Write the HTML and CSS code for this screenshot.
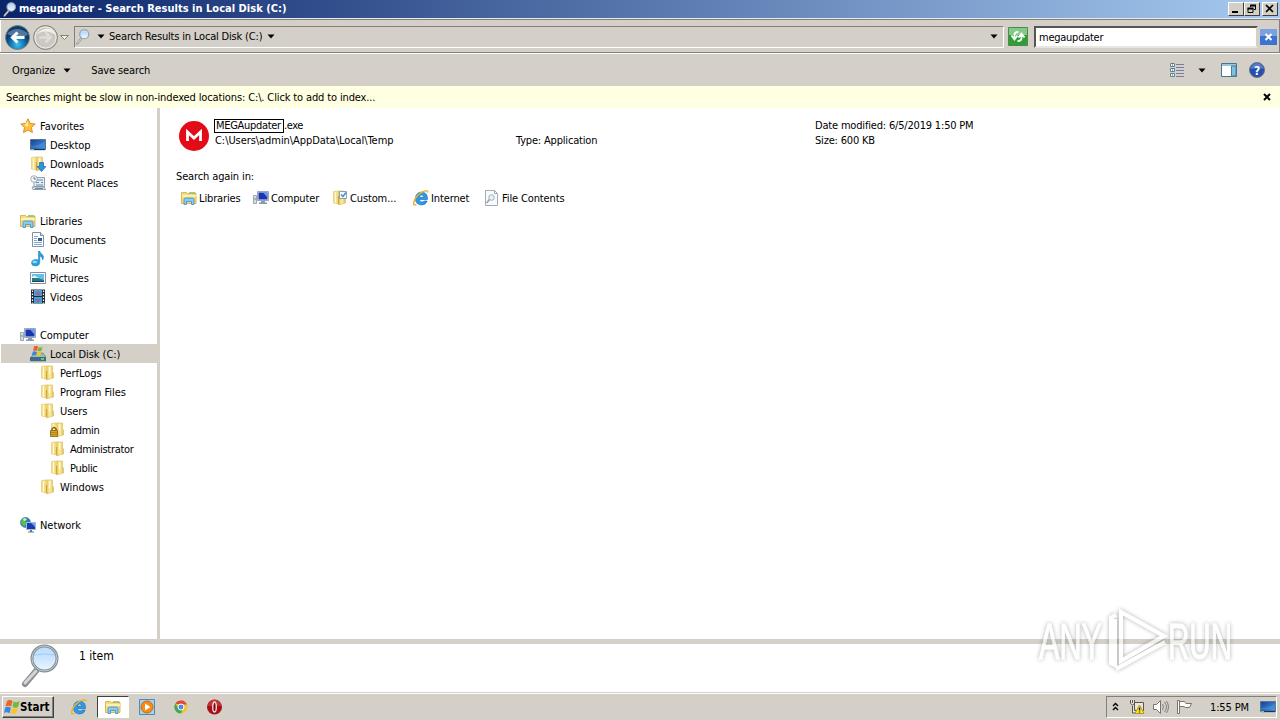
FILE: index.html
```html
<!DOCTYPE html>
<html lang="en">
<head>
    <meta charset="utf-8">
    <title>megaupdater - Search Results in Local Disk (C:)</title>
    <link rel="stylesheet" href="styles.css">
</head>
<body>
    <!-- icon definitions -->
    <svg class="defs" width="0" height="0">
        <defs>
            <linearGradient id="gold" x1="0" x2="1" y2="0"><stop offset="0" stop-color="#f0d672"/><stop offset=".5" stop-color="#fbeca0"/><stop offset="1" stop-color="#dcb94c"/></linearGradient>
            <linearGradient id="blue" x1="0" x2="1" y2="1"><stop offset="0" stop-color="#123f94"/><stop offset="1" stop-color="#4d9be6"/></linearGradient>
            <radialGradient id="sky" cy=".8"><stop offset="0" stop-color="#35c5f4"/><stop offset=".6" stop-color="#1672ae"/><stop offset="1" stop-color="#0b3c6e"/></radialGradient>
            <linearGradient id="lens" x2="0" y2="1"><stop offset="0" stop-color="#bcdcfb"/><stop offset=".45" stop-color="#c8e4ff"/><stop offset="1" stop-color="#edf8ff"/></linearGradient>
            <symbol id="folder" viewBox="0 0 16 16">
                <path d="M1.500 1.500l4-.5h2v13l-6-1z" fill="#f2dc80" stroke="#dfc668" stroke-width=".6"/>
                <path d="M7 1h5.500v6l1 1v5l-6.500 1.800z" fill="url(#gold)" stroke="#d9bb5c" stroke-width=".6"/>
                <path d="M6.500 6v8.500" stroke="#cda63e" stroke-width="1.200"/><path d="M3.500 2v11M9.500 2v7" stroke="#fff9d4" stroke-width="1.300"/>
            </symbol>
            <symbol id="library" viewBox="0 0 16 16">
                <path d="M.5 2.500h5l1 1h8.500v10h-14.500z" fill="#f5dc7d" stroke="#d0aa42" stroke-width=".8"/>
                <path d="M8 2.800h6.500" stroke="#6fb66c"/><path d="M1 6h14" stroke="#fff7c6" stroke-width="1.500"/>
                <path d="M3 14.500V9.500q0-1.500 1.500-1.500h7q1.500 0 1.500 1.500v5h-2.500v-3h-5v3z" fill="#8bcaf0" stroke="#3d8ec6" stroke-width=".8"/>
            </symbol>
            <symbol id="screen" viewBox="0 0 16 16">
                <path d="M.5 2.500h15v10H.5z" fill="url(#blue)" stroke="#5b7692"/>
                <path d="M1 9q7 1 14-5v6H1z" fill="#4b9ae3" opacity=".45"/><path d="M1 12.500h14" stroke="#173659" stroke-width="1.300"/><path d="M1 12.500h3" stroke="#6bcb86"/>
            </symbol>
            <symbol id="computer" viewBox="0 0 16 16">
                <path d="M.5 5.500h3v8h-3z" fill="#d8dde3" stroke="#8996a4" stroke-width=".8"/><path d="M1 9h2" stroke="#58a65a"/>
                <path d="M4.500 1.500h11v9h-11z" fill="#d8e4f3" stroke="#8294b0" stroke-width=".8"/>
                <path d="M5.500 2.500h9v7h-9z" fill="#1a36ad"/><path d="M10 2.500h4.500v5z" fill="#6c99ee"/>
                <path d="M8 11h4v1.500h2V14H6v-1.500h2z" fill="#8b98ab"/>
            </symbol>
            <symbol id="drive" viewBox="0 0 16 16">
                <path d="M2 10l2-3h9l3 4v4H1v-3z" fill="#9bb9ac" stroke="#597568" stroke-width=".6"/><path d="M0 11h16v4H0z" fill="#3d6b8d"/>
                <path d="M11 13h3" stroke="#78eb65" stroke-width="1.500"/>
                <path d="M4 .500q2-1.500 4 0L7 5Q5 4 3 5z" fill="#ee5e2b"/><path d="M8.500 1q2 1 4-.3l-1 4q-2 1-4 .3z" fill="#76b83b"/>
                <path d="M2.800 5.700q2-1 4 .2l-1 3.500q-2-1-4 0z" fill="#3787d8"/><path d="M7.400 6q2 1 4-.2l-1 3.700q-2 1-4 .1z" fill="#f6c52d"/>
            </symbol>
            <symbol id="star" viewBox="0 0 16 16"><path d="M8 .8l2.100 4.600 5.100.6-3.800 3.500 1 5L8 12l-4.500 2.500 1-5L.8 6l5.100-.6z" fill="#ffc23a" stroke="#e08a2b"/><path d="M8 3v6L4.500 7z" fill="#fff1a0"/></symbol>
            <symbol id="download" viewBox="0 0 16 16"><use href="#folder"/><path d="M9.500 6.500h4v4H16l-4.500 5L7 10.500h2.500z" fill="#2d94dd" stroke="#1b67ad" stroke-width=".7"/></symbol>
            <symbol id="recent" viewBox="0 0 16 16">
                <path d="M4 2.500h10.500v9H4zM2 12h12l1.500 2.500H3z" fill="#e5edf2" stroke="#8195a4" stroke-width=".9"/>
                <path d="M7 5h6M6 7.500h3m2 0h2M6 10h7M5 13.500h8" stroke="#668ba8"/>
                <circle cx="4" cy="4" r="3.300" fill="#f3f8fb" stroke="#8a9cab" stroke-width=".8"/><path d="M4 2v2h2" fill="none" stroke="#456079" stroke-width=".8"/>
            </symbol>
            <symbol id="document" viewBox="0 0 16 16"><path d="M2.500.5h8l3 3v11h-11z" fill="#fff" stroke="#8193a6"/><path d="M10.500.5v3h3" fill="#dce8f2" stroke="#71869c"/><path d="M4 4.500h4M4 6.500h3M4 8.500h3M4 10.500h8M4 12.500h8" stroke="#86a8ce"/><path d="M8 6h4v3H8z" fill="#276498"/></symbol>
            <symbol id="music" viewBox="0 0 16 16"><path d="M8.500 0h1.200q.3 2 2.300 3.300 2.600 2 .8 5.700-.2-3-3-4.200V11q0 3.800-4.300 4-4 0-4-3 .2-3.500 4.500-3.500 1.500 0 2.500.6z" fill="#27a0de" stroke="#187bb8" stroke-width=".5"/><ellipse cx="4.800" cy="11" rx="2.300" ry="1.200" fill="#8ddcfa"/></symbol>
            <symbol id="picture" viewBox="0 0 16 16"><path d="M.5 2.500h15v11H.5z" fill="#fff" stroke="#7b8fa6"/><path d="M2 4h12v8H2z" fill="#65bded"/><path d="M2 7q3-2 6 1l6 2v2H2z" fill="#2e7b72"/><path d="M2 7q2-3 5 0l2 1-7 0z" fill="#d4f5fa"/><path d="M2 11h12v1H2z" fill="#18466b"/></symbol>
            <symbol id="video" viewBox="0 0 16 16"><path d="M1 .5h14v14H1z" fill="#202935"/><path d="M4 1h8v6H4z" fill="#5598d4"/><path d="M4 8h8v6H4z" fill="#32a6df"/><path d="M5 5q3-5 6 0l-2 2zM5 11q3-3 6 0l-3 3z" fill="#8c6f92"/><path d="M2.500 1.500v13M13.500 1.500v13" stroke="#fff" stroke-dasharray="1.500 1.500" stroke-width="1.200"/></symbol>
            <symbol id="lock" viewBox="0 0 16 16"><use href="#folder"/><path d="M2 9V7q2-3 4 0v2" fill="none" stroke="#815b1a" stroke-width="1.300"/><path d="M.5 8.500h7v6h-7z" fill="#dda624" stroke="#835d12" stroke-width=".8"/><path d="M1 10.500h6M1 12.500h6" stroke="#a97f20" stroke-width=".8"/></symbol>
            <symbol id="network" viewBox="0 0 16 16"><circle cx="5.500" cy="5.500" r="5" fill="#2582bd" stroke="#3d6a9d" stroke-width=".6"/><path d="M2 2q3-2 5 0L5 4l2 2-3 4-3-4z" fill="#57bd55"/><path d="M3 2l2-1 2 2-3 1z" fill="#d3efba"/><path d="M6.500 5.500h9v7h-9z" fill="#1739ba" stroke="#a8bbcf"/><path d="M11 6h4v4z" fill="#6c9df2"/><path d="M10 13h2v1.500h2v1H8v-1h2z" fill="#6b7885"/></symbol>
            <symbol id="custom" viewBox="0 0 16 16"><use href="#folder"/><path d="M7.500 1.500h7v7h-7z" fill="#f4faff" stroke="#8ba0b5"/><path d="M9 4.500l2 2 3-4" fill="none" stroke="#3d85c5" stroke-width="1.300"/></symbol>
            <symbol id="ie" viewBox="0 0 16 16">
                <path d="M14.500 9.500H6.200q.5 2.500 2.800 2.500 1.500 0 2-1h3.200q-1.200 4-5.700 4-6-.4-6.200-6.400Q2.600 2.600 8.500 2 15 2.500 14.500 9.500zM6.300 7.300h4.600Q10.700 5 8.500 5 6.500 5 6.300 7.300z" fill="#2d9ae6" stroke="#1a66b8" stroke-width=".6"/>
                <path d="M3.500 14.500q-4 1.500-2.500-3Q3 5.500 9 2.200q6-3 6 .2" fill="none" stroke="#edb52f" stroke-width="1.500"/>
            </symbol>
            <symbol id="filecontents" viewBox="0 0 16 16"><path d="M1.500.5h9l3 3v12h-12z" fill="#f8fafb" stroke="#a3abb2"/><path d="M10.500.5v3h3" fill="none" stroke="#a3abb2"/><circle cx="7.500" cy="7.500" r="2.800" fill="#e5f2f9" stroke="#a0afbb"/><path d="M5.500 9.500l-3 3.500" stroke="#929da6" stroke-width="1.500"/></symbol>
            <symbol id="glass" viewBox="0 0 40 44">
                <path d="M15 27L4 40" stroke="#8b8f93" stroke-width="6" stroke-linecap="round"/><path d="M15 27L4 39" stroke="#d3d5d7" stroke-width="3" stroke-linecap="round"/>
                <circle cx="23.500" cy="14.500" r="12.500" fill="url(#lens)" stroke="#858d95" stroke-width="3"/><circle cx="23.500" cy="14.500" r="12.500" fill="none" stroke="#c3cbd2" stroke-width="1"/>
                <path d="M13 11q11-2 21 0" fill="none" stroke="#a1ccf4"/>
            </symbol>
            <symbol id="flag" viewBox="0 0 16 16"><path d="M3 2q3-2 5.500 0L7.300 7.500Q5 6 1.500 7.500z" fill="#eb642a"/><path d="M9.500 2.500q3 1.500 6-.5l-1.400 6q-3 1.500-5.500 0z" fill="#73b93c"/><path d="M1.200 8.500q3-1.500 5.700.3l-1.300 5.400q-3-2-5.600-.2z" fill="#3a88dc"/><path d="M8.200 9q3 1.500 5.600-.2l-1.300 5.400q-3 1.500-5.700.2z" fill="#f7c52e"/></symbol>
            <symbol id="down" viewBox="0 0 8 5"><path d="M.5 .5h7L4 4.500z"/></symbol>
            <filter id="soft" x="-10%" y="-20%" width="120%" height="140%"><feDropShadow dx="0" dy="0" stdDeviation="2" flood-color="#555" flood-opacity=".75"/></filter>
        </defs>
    </svg>

    <div class="window">
        <div class="titlebar">
            <svg class="icon"><use href="#glass"/></svg>
            <h1>megaupdater - Search Results in Local Disk (C:)</h1>
            <div class="window-buttons">
                <button aria-label="Minimize"><svg width="12" height="10"><path d="M2 7h6v2H2z"/></svg></button>
                <button aria-label="Restore"><svg width="12" height="10"><path d="M4 .5h6v2H4zM1.500 3.500h6v2h-6z"/><path d="M4.500 3V1.500h5v4H8M2 4.500h5v4H2z" fill="none" stroke="#000"/></svg></button>
                <button class="close" aria-label="Close"><svg width="12" height="10"><path d="M2 1l7 7M9 1L2 8" stroke="#000" stroke-width="1.700"/></svg></button>
            </div>
        </div>

        <div class="navbar">
            <svg class="history" width="70" height="28" viewBox="0 0 70 28">
                <circle cx="15.500" cy="14.500" r="12" fill="url(#sky)" stroke="#71818d"/><path d="M5 10.500q10-9 21 0-1 4-10 3-8 0-11-3z" fill="#fff" opacity=".3"/>
                <path d="M22.500 14.500h-12m5-5l-5 5 5 5" fill="none" stroke="#fff" stroke-width="3"/>
                <circle cx="43.500" cy="14.500" r="12" fill="#cbc8c2" stroke="#85827d"/><circle cx="43.500" cy="14.500" r="10.500" fill="none" stroke="#efede9"/><path d="M32.500 12.500q11-8 22 0-7-14-22 0z" fill="#f1efec"/>
                <path d="M37.500 14.500h11m-5-5l5 5-5 5" fill="none" stroke="#e0ddd8" stroke-width="2.500"/>
                <path d="M58.500 12.500h8l-4 4z" fill="#f3f1ee" stroke="#858078"/>
            </svg>
            <div class="address">
                <svg class="icon"><use href="#glass"/></svg>
                <svg class="arrow"><use href="#down"/></svg>
                <span>Search Results in Local Disk (C:)</span>
                <svg class="arrow"><use href="#down"/></svg>
                <svg class="arrow last"><use href="#down"/></svg>
            </div>
            <svg class="refresh" width="20" height="19" viewBox="0 0 20 19"><path d="M.5.5h19v18H.5z" fill="#2f9e35" stroke="#528751"/><path d="M1 1h18v7H1z" fill="#83c989"/><path d="M6.500 12V8q0-3 4-3M3.500 8.500l3 4 3-4M13.500 7v4q0 3-4 3M10.500 10.500l3-4 3 4" fill="none" stroke="#fff" stroke-width="1.800"/></svg>
            <div class="search"><span>megaupdater</span></div>
            <svg class="clear" width="17" height="16"><path d="M0 0h17v16H0z" fill="#3a74d0"/><path d="M0 0h17v7H0z" fill="#7ba1e3"/><path d="M5.500 5l6 6M11.500 5l-6 6" stroke="#fff" stroke-width="2"/></svg>
        </div>

        <div class="toolbar">
            <span class="organize">Organize</span>
            <svg class="arrow"><use href="#down"/></svg>
            <span class="save">Save search</span>
            <svg class="view" width="15" height="15" viewBox="0 0 15 15"><path d="M.5.5h4v3h-4zM.5 5.500h4v3h-4zM.5 10.500h4v3h-4z" fill="#fff" stroke="#5d8294"/><path d="M2 2h1M2 7h1M2 12h1" stroke="#235f80"/><path d="M6 1.500h8M6 4.500h8M6 7.500h8M6 10.500h8M6 13.500h8" stroke="#797ba3"/></svg>
            <svg class="arrow"><use href="#down"/></svg>
            <svg class="preview" width="16" height="15" viewBox="0 0 16 15"><path d="M.5.500h15v13H.5z" fill="#fff" stroke="#427590"/><path d="M1 1h14v2H1z" fill="#9cc6d8"/><path d="M10.500 3v10h4.500V3z" fill="#7dc0df" stroke="#487f99"/></svg>
            <svg class="help" width="16" height="16"><circle cx="8" cy="8" r="7.500" fill="#254eb0" stroke="#6c7391"/><path d="M1.500 7q2-6 6.500-6t6.500 6q-6-2-13 0z" fill="#779ada" opacity=".6"/><text x="5" y="12.500">?</text></svg>
        </div>

        <div class="infobar"><span>Searches might be slow in non-indexed locations: C:\. Click to add to index...</span><svg width="8" height="8"><path d="M1 1l6 6M7 1L1 7" stroke="#000" stroke-width="2"/></svg></div>

        <div class="content">
            <ul class="tree">
                <li><svg class="icon"><use href="#star"/></svg><span>Favorites</span></li>
                <li class="level-1"><svg class="icon"><use href="#screen"/></svg><span>Desktop</span></li>
                <li class="level-1"><svg class="icon"><use href="#download"/></svg><span>Downloads</span></li>
                <li class="level-1"><svg class="icon"><use href="#recent"/></svg><span>Recent Places</span></li>
                <li class="group"><svg class="icon"><use href="#library"/></svg><span>Libraries</span></li>
                <li class="level-1"><svg class="icon"><use href="#document"/></svg><span>Documents</span></li>
                <li class="level-1"><svg class="icon"><use href="#music"/></svg><span>Music</span></li>
                <li class="level-1"><svg class="icon"><use href="#picture"/></svg><span>Pictures</span></li>
                <li class="level-1"><svg class="icon"><use href="#video"/></svg><span>Videos</span></li>
                <li class="group"><svg class="icon"><use href="#computer"/></svg><span>Computer</span></li>
                <li class="level-1 selected"><svg class="icon"><use href="#drive"/></svg><span>Local Disk (C:)</span></li>
                <li class="level-2"><svg class="icon"><use href="#folder"/></svg><span>PerfLogs</span></li>
                <li class="level-2"><svg class="icon"><use href="#folder"/></svg><span>Program Files</span></li>
                <li class="level-2"><svg class="icon"><use href="#folder"/></svg><span>Users</span></li>
                <li class="level-3"><svg class="icon"><use href="#lock"/></svg><span>admin</span></li>
                <li class="level-3"><svg class="icon"><use href="#folder"/></svg><span>Administrator</span></li>
                <li class="level-3"><svg class="icon"><use href="#folder"/></svg><span>Public</span></li>
                <li class="level-2"><svg class="icon"><use href="#folder"/></svg><span>Windows</span></li>
                <li class="group"><svg class="icon"><use href="#network"/></svg><span>Network</span></li>
            </ul>
            <div class="results">
                <div class="result">
                    <svg width="30" height="30"><circle cx="15" cy="15" r="15" fill="#e30b17"/><path d="M8.500 20v-9l6.500 6 6.500-6v9" fill="none" stroke="#fff" stroke-width="2.800"/></svg>
                    <div class="name"><div><mark>MEGAupdater</mark><span>.exe</span></div><div class="path">C:\Users\admin\AppData\Local\Temp</div></div>
                    <div class="type">Type: Application</div>
                    <div class="meta"><div>Date modified: 6/5/2019 1:50 PM</div><div>Size: 600 KB</div></div>
                </div>
                <p>Search again in:</p>
                <div class="again">
                    <span class="to-libraries"><svg class="icon"><use href="#library"/></svg>Libraries</span>
                    <span class="to-computer"><svg class="icon"><use href="#computer"/></svg>Computer</span>
                    <span class="to-custom"><svg class="icon"><use href="#custom"/></svg>Custom...</span>
                    <span class="to-internet"><svg class="icon"><use href="#ie"/></svg>Internet</span>
                    <span class="to-contents"><svg class="icon"><use href="#filecontents"/></svg>File Contents</span>
                </div>
            </div>
        </div>

        <div class="details"><svg class="big-glass"><use href="#glass"/></svg><span>1 item</span></div>

        <div class="taskbar">
            <button class="start"><svg class="icon"><use href="#flag"/></svg>Start</button>
            <div class="task"><svg class="icon"><use href="#ie"/></svg></div>
            <div class="task active"><svg class="icon"><use href="#library"/></svg></div>
            <div class="task"><svg class="icon" viewBox="0 0 16 16"><path d="M.5.500h15v15H.5z" fill="#a8d1ee" stroke="#4b8bc3"/><circle cx="8" cy="8" r="6" fill="#f58b14" stroke="#d06a0b"/><path d="M6 4.500v7l5.500-3.500z" fill="#fff"/></svg></div>
            <div class="task"><svg class="icon" viewBox="0 0 16 16"><circle cx="8" cy="8" r="6.500" fill="#f3c52e"/><path d="M2.300 4.700A6.500 6.500 0 0 1 14 5.500H8z" fill="#df4937"/><path d="M2.300 4.700A6.500 6.500 0 0 0 8 14.500L10 9 5.500 9z" fill="#42a657"/><circle cx="8" cy="8" r="3" fill="#4b8bea" stroke="#fff"/></svg></div>
            <div class="task"><svg class="icon" viewBox="0 0 16 16"><circle cx="7.500" cy="8" r="7.500" fill="#a81017"/><path d="M1 7a6.500 6.500 0 0 1 13 0z" fill="#dc5656" opacity=".5"/><ellipse cx="7.500" cy="8" rx="1.800" ry="5" fill="#800a0e" stroke="#f3dcdc" stroke-width="1.400"/></svg></div>
            <div class="tray">
                <svg width="9" height="10" viewBox="0 0 9 10"><path d="M2 4l2.500-2.500L7 4M2 8l2.500-2.500L7 8" fill="none" stroke="#000" stroke-width="1.400"/></svg>
                <svg class="net" width="17" height="16" viewBox="0 0 17 16"><path d="M5.500 3.500h9v8h-9zM3.500 7v7h8M1.500 1v3.500q2 3 4 0V1M3.500 1v3" fill="#e8e6e1" stroke="#575651"/><path d="M10.500 6l4.500 8.500H6z" fill="#ffe335" stroke="#b99816"/><path d="M10.500 8.500v3m0 1v1" stroke="#222" stroke-width="1.400"/></svg>
                <svg class="speaker" width="16" height="16" viewBox="0 0 16 16"><path d="M.5 5.500h3l4-4v13l-4-4h-3z" fill="#fff" stroke="#76736e"/><path d="M9.500 5q2 3 0 6M11.500 3q4 5 0 10M13.500 2q4 6 0 12" fill="none" stroke="#858179"/></svg>
                <svg class="action" width="17" height="16" viewBox="0 0 17 16"><path d="M1.500 1.500h2v13h-2zM3.500 2.500h5l1.500 2h5.500l-2 4h-4L8 7.500H3.500z" fill="#fff" stroke="#77736d"/></svg>
                <span>1:55 PM</span>
                <svg class="icon"><use href="#screen"/></svg>
            </div>
        </div>
    </div>

    <svg class="watermark" width="250" height="80" viewBox="0 0 250 80">
        <g filter="url(#soft)" fill="#fff">
            <text x="9" y="57" textLength="63" lengthAdjust="spacingAndGlyphs">ANY</text>
            <path d="M91 10l43 24-43 25zM86 13l-5 3v45l4 2V17M86 67l49-27" fill="none" stroke="#fff" stroke-width="4"/>
            <text x="138" y="57" textLength="64" lengthAdjust="spacingAndGlyphs">RUN</text>
        </g>
    </svg>
</body>
</html>
```

FILE: styles.css
```css
* {
    box-sizing: border-box;
}
body {
    margin: 0;
    font-family: "DejaVu Sans Condensed", "DejaVu Sans", sans-serif;
    font-stretch: condensed;
    font-size: 11px;
    line-height: 15px;
    letter-spacing: -0.13px;
    color: #000;
    background-color: #fff;
    white-space: nowrap;
}
svg {
    display: block;
    flex: none;
}
.defs {
    position: absolute;
}
.window {
    width: 1280px;
    height: 720px;
    display: flex;
    flex-direction: column;
    overflow: hidden;
}
.icon {
    width: 16px;
    height: 16px;
}
.arrow {
    width: 8px;
    height: 5px;
}
.titlebar {
    height: 18px;
    display: flex;
    align-items: center;
    padding: 0 2px 0 3px;
    color: #fff;
    background: linear-gradient(to right, #0a246a, #a6caf0);
}
.titlebar .icon {
    width: 14px;
    height: 15px;
    margin-right: 2px;
}
h1 {
    margin: 0;
    font-size: 11px;
    line-height: 18px;
    letter-spacing: 0.02px;
}
.window-buttons {
    display: flex;
    margin-left: auto;
}
.window-buttons button {
    width: 16px;
    height: 14px;
    padding: 1px;
    background-color: #d4d0c8;
    border: 1px solid;
    border-color: #fff #404040 #404040 #fff;
}
.window-buttons .close {
    margin-left: 2px;
}
.navbar {
    height: 36px;
    display: flex;
    align-items: center;
    padding-top: 1px;
    padding-left: 2px;
    background-color: #d4d0c8;
    border-top: 1px solid #eceae6;
    border-bottom: 1px solid #fff;
    box-shadow: inset 0 1px #808080, inset 0 -1px #808080, inset 1px 0 #fff, inset -1px 0 #808080;
}
.address {
    width: 930px;
    height: 22px;
    margin-left: 2px;
    display: flex;
    align-items: center;
    letter-spacing: -0.18px;
    border: 1px solid;
    border-color: #808080 #fff #fff #808080;
}
.address .arrow {
    margin: 0 4px 0 6px;
}
.address span + .arrow {
    margin-left: 5px;
}
.address .last {
    margin-left: auto;
    margin-right: 5px;
}
.refresh {
    margin-left: 4px;
}
.search {
    width: 224px;
    height: 22px;
    margin-left: 6px;
    padding: 2px 3px;
    letter-spacing: -0.25px;
    background-color: #fff;
    border: 2px solid;
    border-color: #555 #d4d0c8 #e8e6e1 #555;
}
.clear {
    margin-left: 2px;
}
.toolbar {
    height: 32px;
    display: flex;
    align-items: center;
    padding: 0 15px 0 12px;
    background-color: #d4d0c8;
}
.toolbar .arrow {
    margin-left: 8px;
}
.save {
    margin-left: 20px;
}
.view {
    margin-left: auto;
}
.toolbar .view + .arrow {
    margin-left: 13px;
}
.preview {
    margin-left: 15px;
}
.help {
    margin-left: 12px;
}
.help text {
    font-weight: bold;
    font-size: 12px;
    fill: #fff;
}
.infobar {
    height: 22px;
    display: flex;
    align-items: center;
    justify-content: space-between;
    padding: 0 9px 0 6px;
    background-color: #ffffe1;
}
.content {
    height: 531px;
    display: flex;
}
.tree {
    width: 160px;
    margin: 0;
    padding: 8px 0 0 1px;
    list-style: none;
    letter-spacing: -0.05px;
    border-right: 3px solid #d4d0c8;
}
.tree li {
    height: 19px;
    display: flex;
    align-items: center;
    gap: 4px;
    padding-left: 19px;
}
.tree span {
    padding-top: 2px;
}
.tree .group {
    margin-top: 19px;
}
.tree .level-1 {
    padding-left: 29px;
}
.tree .level-2 {
    padding-left: 39px;
}
.tree .level-3 {
    padding-left: 49px;
    letter-spacing: -0.3px;
}
.tree .selected {
    background-color: #d4d0c8;
}
.results {
    flex: 1;
    padding: 10px 0 0 16px;
}
.result {
    display: flex;
    padding-left: 3px;
}
.result > svg {
    margin-top: 3px;
}
.name {
    width: 307px;
    padding-left: 5px;
}
.name > div {
    height: 15px;
}
mark {
    display: inline-block;
    width: 70px;
    height: 14px;
    line-height: 12px;
    padding: 0 1px;
    letter-spacing: -0.3px;
    color: #000;
    background: none;
    border: 1px solid #000;
}
.name span {
    letter-spacing: -0.4px;
}
.name .path {
    padding-left: 1px;
    letter-spacing: -0.06px;
}
.type {
    width: 299px;
    padding-top: 15px;
    letter-spacing: -0.18px;
}
.meta {
    letter-spacing: -0.18px;
}
.results p {
    margin: 18px 0 0;
}
.again {
    display: flex;
    margin-top: 6px;
    padding-left: 5px;
}
.again span {
    display: flex;
    align-items: center;
    gap: 2px;
}
.to-libraries {
    width: 72px;
}
.to-computer {
    width: 79px;
}
.to-custom {
    width: 81px;
}
.to-internet {
    width: 71px;
}
.details {
    height: 53px;
    display: flex;
    border-top: 5px solid #d4d0c8;
    padding-left: 21px;
    font-size: 12px;
}
.details span {
    margin: 5px 0 0 18px;
    letter-spacing: 0;
}
.big-glass {
    width: 40px;
    height: 44px;
}
.taskbar {
    height: 28px;
    display: flex;
    align-items: center;
    padding: 2px 3px 0 2px;
    background-color: #d4d0c8;
    box-shadow: inset 0 1px #d4d0c8, inset 0 2px #fff;
}
.start {
    width: 52px;
    height: 22px;
    margin-right: 9px;
    padding: 0 1px;
    display: flex;
    align-items: center;
    font-family: inherit;
    font-stretch: inherit;
    font-size: 11.5px;
    font-weight: bold;
    background-color: #d4d0c8;
    border: 1px solid;
    border-color: #fff #404040 #404040 #fff;
    box-shadow: inset -1px -1px #808080;
}
.task {
    width: 32px;
    height: 22px;
    margin-right: 2px;
    display: flex;
    align-items: center;
    justify-content: center;
}
.task.active {
    background-color: #fff;
    border: 1px solid;
    border-color: #404040 #fff #fff #404040;
}
.tray {
    width: 171px;
    height: 22px;
    margin-left: auto;
    display: flex;
    align-items: center;
    padding: 0 0 0 4px;
    border: 1px solid;
    border-color: #808080 #fff #fff #808080;
}
.net {
    margin-left: 9px;
}
.speaker, .action {
    margin-left: 7px;
}
.tray span {
    margin-left: 17px;
}
.tray .icon {
    margin-left: auto;
}
.watermark {
    position: absolute;
    left: 1030px;
    top: 602px;
    opacity: .65;
}
.watermark text {
    font-family: "Liberation Sans Narrow", "Liberation Sans", sans-serif;
    font-size: 50px;
    letter-spacing: 0;
    stroke: #fff;
    stroke-width: .8px;
}
```
